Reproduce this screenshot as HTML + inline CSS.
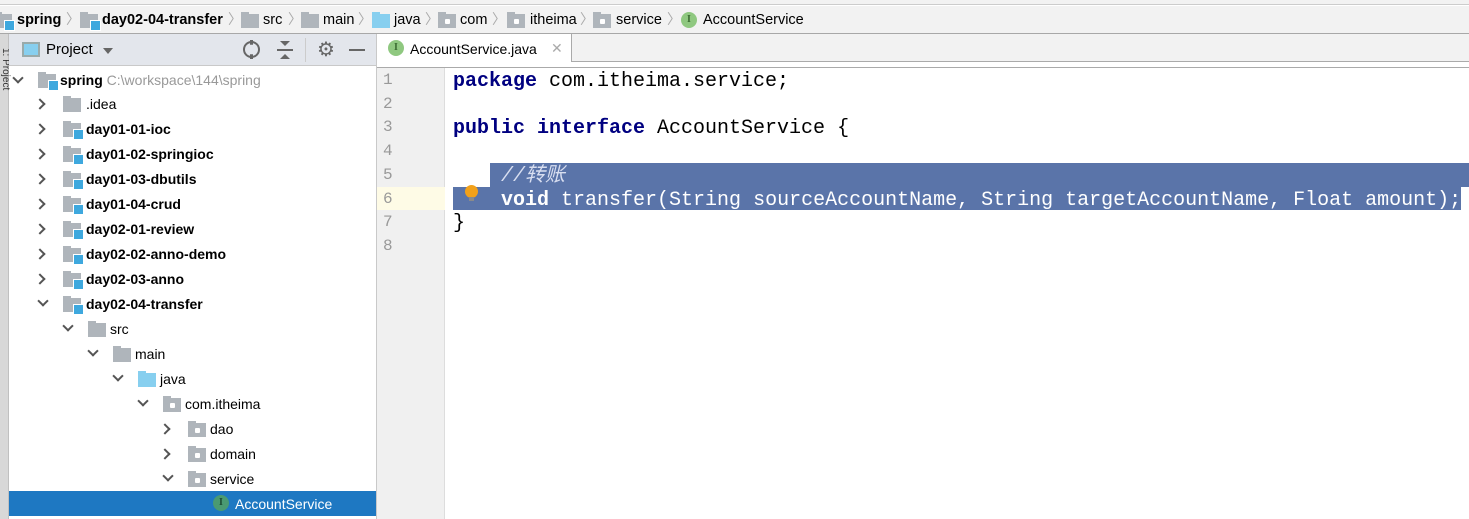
<!DOCTYPE html>
<html><head><meta charset="utf-8"><style>
*{margin:0;padding:0;box-sizing:border-box}
body{width:1469px;height:519px;overflow:hidden;background:#fff;font-family:"Liberation Sans","Noto Sans CJK SC",sans-serif;font-size:14px;color:#000;position:relative}
.abs{position:absolute}
.fold{position:absolute;width:18px;height:14px;background:#afb5bb}
.fold:before{content:"";position:absolute;left:0;top:-2px;width:8px;height:3px;background:#afb5bb}
.mod:after{content:"";position:absolute;right:-3px;bottom:-3px;width:9px;height:9px;background:#3ea8de;border:1px solid #fff}
.pkg:after{content:"";position:absolute;left:7px;top:5px;width:5px;height:5px;background:#fff;border-radius:1px}
.java{background:#87cfef}.java:before{background:#87cfef}
.arr{position:absolute;width:8px;height:8px;border-right:2px solid #555;border-bottom:2px solid #555}
.r{transform:rotate(-45deg)}.d{transform:rotate(45deg)}
.ic{position:absolute;width:16px;height:16px;border-radius:50%;background:#8fc880;color:#3a6b31;font:bold 10px "Liberation Serif",serif;text-align:center;line-height:16px}
.t{position:absolute;font-size:14px;line-height:18px;white-space:nowrap}
.bc{font-size:14.5px}
.b{font-weight:bold}
.code{position:absolute;font-family:"Liberation Mono","Noto Sans CJK SC",monospace;font-size:20px;white-space:pre;line-height:23.7px;color:#000}
.kw{color:#000080;font-weight:bold}
.ln{position:absolute;left:383px;width:20px;font-family:"Liberation Mono",monospace;font-size:16px;color:#999;line-height:23.7px}
</style></head><body>
<div class="abs" style="left:0;top:0;width:1469px;height:5px;background:#f2f2f2;border-bottom:1px solid #ccc"></div>
<div class="abs" style="left:0;top:6px;width:1469px;height:28px;background:#f2f2f2;border-bottom:1px solid #a8a8a8"></div>
<!-- breadcrumb -->
<div class="fold mod" style="left:-6px;top:14px"></div><div class="t b bc" style="left:17px;top:11px">spring</div>
<div class="t" style="left:66px;top:10px;color:#aaa">〉</div>
<div class="fold mod" style="left:80px;top:14px"></div><div class="t b bc" style="left:102px;top:11px">day02-04-transfer</div>
<div class="t" style="left:228px;top:10px;color:#aaa">〉</div>
<div class="fold" style="left:241px;top:14px"></div><div class="t bc" style="left:263px;top:11px">src</div>
<div class="t" style="left:288px;top:10px;color:#aaa">〉</div>
<div class="fold" style="left:301px;top:14px"></div><div class="t bc" style="left:323px;top:11px">main</div>
<div class="t" style="left:358px;top:10px;color:#aaa">〉</div>
<div class="fold java" style="left:372px;top:14px"></div><div class="t bc" style="left:394px;top:11px">java</div>
<div class="t" style="left:425px;top:10px;color:#aaa">〉</div>
<div class="fold pkg" style="left:438px;top:14px"></div><div class="t bc" style="left:460px;top:11px">com</div>
<div class="t" style="left:492px;top:10px;color:#aaa">〉</div>
<div class="fold pkg" style="left:507px;top:14px"></div><div class="t bc" style="left:530px;top:11px">itheima</div>
<div class="t" style="left:580px;top:10px;color:#aaa">〉</div>
<div class="fold pkg" style="left:593px;top:14px"></div><div class="t bc" style="left:616px;top:11px">service</div>
<div class="t" style="left:667px;top:10px;color:#aaa">〉</div>
<div class="ic" style="left:681px;top:12px">I</div><div class="t bc" style="left:703px;top:11px">AccountService</div>
<!-- left strip -->
<div class="abs" style="left:0;top:34px;width:9px;height:485px;background:#d8d8d8;border-right:1px solid #c0c0c0"></div>
<div class="abs" style="left:0;top:48px;font-size:10px;writing-mode:vertical-rl;color:#333">1: Project</div>
<!-- project header -->
<div class="abs" style="left:9px;top:34px;width:367px;height:32px;background:#e3e6ec;border-bottom:1px solid #c9c9c9"></div>
<div class="abs" style="left:22px;top:42px;width:18px;height:15px;border:2px solid #9aa;background:#87cfef"></div>
<div class="t" style="left:46px;top:41px;font-size:15px">Project</div>
<div class="abs" style="left:103px;top:48px;border:5px solid transparent;border-top:6px solid #666"></div>
<div class="abs" style="left:243px;top:41px;width:17px;height:17px;border:2px solid #666;border-radius:50%"></div>
<div class="abs" style="left:250px;top:40px;width:3px;height:19px;background:#666;clip-path:polygon(0 0,100% 0,100% 25%,0 25%,0 75%,100% 75%,100% 100%,0 100%)"></div>
<div class="abs" style="left:277px;top:49px;width:16px;height:2px;background:#666"></div>
<div class="abs" style="left:280px;top:41px;border:5px solid transparent;border-top:5px solid #666;border-bottom:0"></div>
<div class="abs" style="left:280px;top:54px;border:5px solid transparent;border-bottom:5px solid #666;border-top:0"></div>
<div class="abs" style="left:305px;top:38px;width:1px;height:24px;background:#ccc"></div>
<div class="abs" style="left:317px;top:41px;font-size:20px;color:#666;line-height:18px">⚙</div>
<div class="abs" style="left:349px;top:49px;width:16px;height:2px;background:#666"></div>
<!-- editor chrome -->
<div class="abs" style="left:376px;top:34px;width:1px;height:485px;background:#c9c9c9"></div>
<div class="abs" style="left:377px;top:34px;width:1092px;height:28px;background:#f2f2f2;border-bottom:1px solid #aaa"></div>
<div class="abs" style="left:377px;top:34px;width:195px;height:29px;background:#fff;border-right:1px solid #aaa"></div>
<div class="abs" style="left:377px;top:62px;width:1092px;height:6px;background:#fff;border-bottom:1px solid #aaa"></div>
<div class="ic" style="left:388px;top:40px">I</div>
<div class="t" style="left:410px;top:40px">AccountService.java</div>
<div class="t" style="left:551px;top:39px;color:#aaa">✕</div>
<!-- gutter -->
<div class="abs" style="left:377px;top:68px;width:68px;height:451px;background:#f0f0f0;border-right:1px solid #ddd"></div>
<div class="abs" style="left:377px;top:187px;width:68px;height:23px;background:#fefbe6"></div>
<div class="ln" style="top:69px">1<br>2<br>3<br>4<br>5<br>6<br>7<br>8</div>
<!-- selection -->
<div class="abs" style="left:490px;top:163px;width:979px;height:24px;background:#5a74a9"></div>
<div class="abs" style="left:453px;top:187px;width:1008px;height:23px;background:#5a74a9"></div>
<div class="abs" style="left:465px;top:185px;width:13px;height:13px;border-radius:50%;background:#f2a11a"></div>
<div class="abs" style="left:469px;top:197px;width:5px;height:4px;background:#8a8a8a"></div>
<div class="code" style="left:453px;top:70px"><span class="kw">package</span> com.itheima.service;

<span class="kw">public interface</span> AccountService {

    <span style="color:#d8def0;font-style:italic">//转账</span>
    <span class="kw" style="color:#fff">void</span><span style="color:#fff"> transfer(String sourceAccountName, String targetAccountName, Float amount);</span>
}</div>
<!-- tree -->
<div class="abs" style="left:9px;top:491px;width:367px;height:25px;background:#1e78c2"></div>
<div class="arr d" style="left:14px;top:74px"></div><div class="fold mod" style="left:38px;top:74px"></div>
<div class="t b" style="left:60px;top:71px">spring <span style="font-weight:normal;color:#999">C:\workspace\144\spring</span></div>

<div class="arr r" style="left:36px;top:100px"></div><div class="fold" style="left:63px;top:98px"></div><div class="t" style="left:86px;top:95px">.idea</div>
<div class="arr r" style="left:36px;top:125px"></div><div class="fold mod" style="left:63px;top:123px"></div><div class="t b" style="left:86px;top:120px">day01-01-ioc</div>
<div class="arr r" style="left:36px;top:150px"></div><div class="fold mod" style="left:63px;top:148px"></div><div class="t b" style="left:86px;top:145px">day01-02-springioc</div>
<div class="arr r" style="left:36px;top:175px"></div><div class="fold mod" style="left:63px;top:173px"></div><div class="t b" style="left:86px;top:170px">day01-03-dbutils</div>
<div class="arr r" style="left:36px;top:200px"></div><div class="fold mod" style="left:63px;top:198px"></div><div class="t b" style="left:86px;top:195px">day01-04-crud</div>
<div class="arr r" style="left:36px;top:225px"></div><div class="fold mod" style="left:63px;top:223px"></div><div class="t b" style="left:86px;top:220px">day02-01-review</div>
<div class="arr r" style="left:36px;top:250px"></div><div class="fold mod" style="left:63px;top:248px"></div><div class="t b" style="left:86px;top:245px">day02-02-anno-demo</div>
<div class="arr r" style="left:36px;top:275px"></div><div class="fold mod" style="left:63px;top:273px"></div><div class="t b" style="left:86px;top:270px">day02-03-anno</div>
<div class="arr d" style="left:39px;top:297px"></div><div class="fold mod" style="left:63px;top:298px"></div><div class="t b" style="left:86px;top:295px">day02-04-transfer</div>
<div class="arr d" style="left:64px;top:322px"></div><div class="fold" style="left:88px;top:323px"></div><div class="t" style="left:110px;top:320px">src</div>
<div class="arr d" style="left:89px;top:347px"></div><div class="fold" style="left:113px;top:348px"></div><div class="t" style="left:135px;top:345px">main</div>
<div class="arr d" style="left:114px;top:372px"></div><div class="fold java" style="left:138px;top:373px"></div><div class="t" style="left:160px;top:370px">java</div>
<div class="arr d" style="left:139px;top:397px"></div><div class="fold pkg" style="left:163px;top:398px"></div><div class="t" style="left:185px;top:395px">com.itheima</div>
<div class="arr r" style="left:161px;top:425px"></div><div class="fold pkg" style="left:188px;top:423px"></div><div class="t" style="left:210px;top:420px">dao</div>
<div class="arr r" style="left:161px;top:450px"></div><div class="fold pkg" style="left:188px;top:448px"></div><div class="t" style="left:210px;top:445px">domain</div>
<div class="arr d" style="left:164px;top:472px"></div><div class="fold pkg" style="left:188px;top:473px"></div><div class="t" style="left:210px;top:470px">service</div>
<div class="ic" style="left:213px;top:495px;background:#4a9a72;color:#1c4a33">I</div><div class="t" style="left:235px;top:495px;color:#fff">AccountService</div>
</body></html>
